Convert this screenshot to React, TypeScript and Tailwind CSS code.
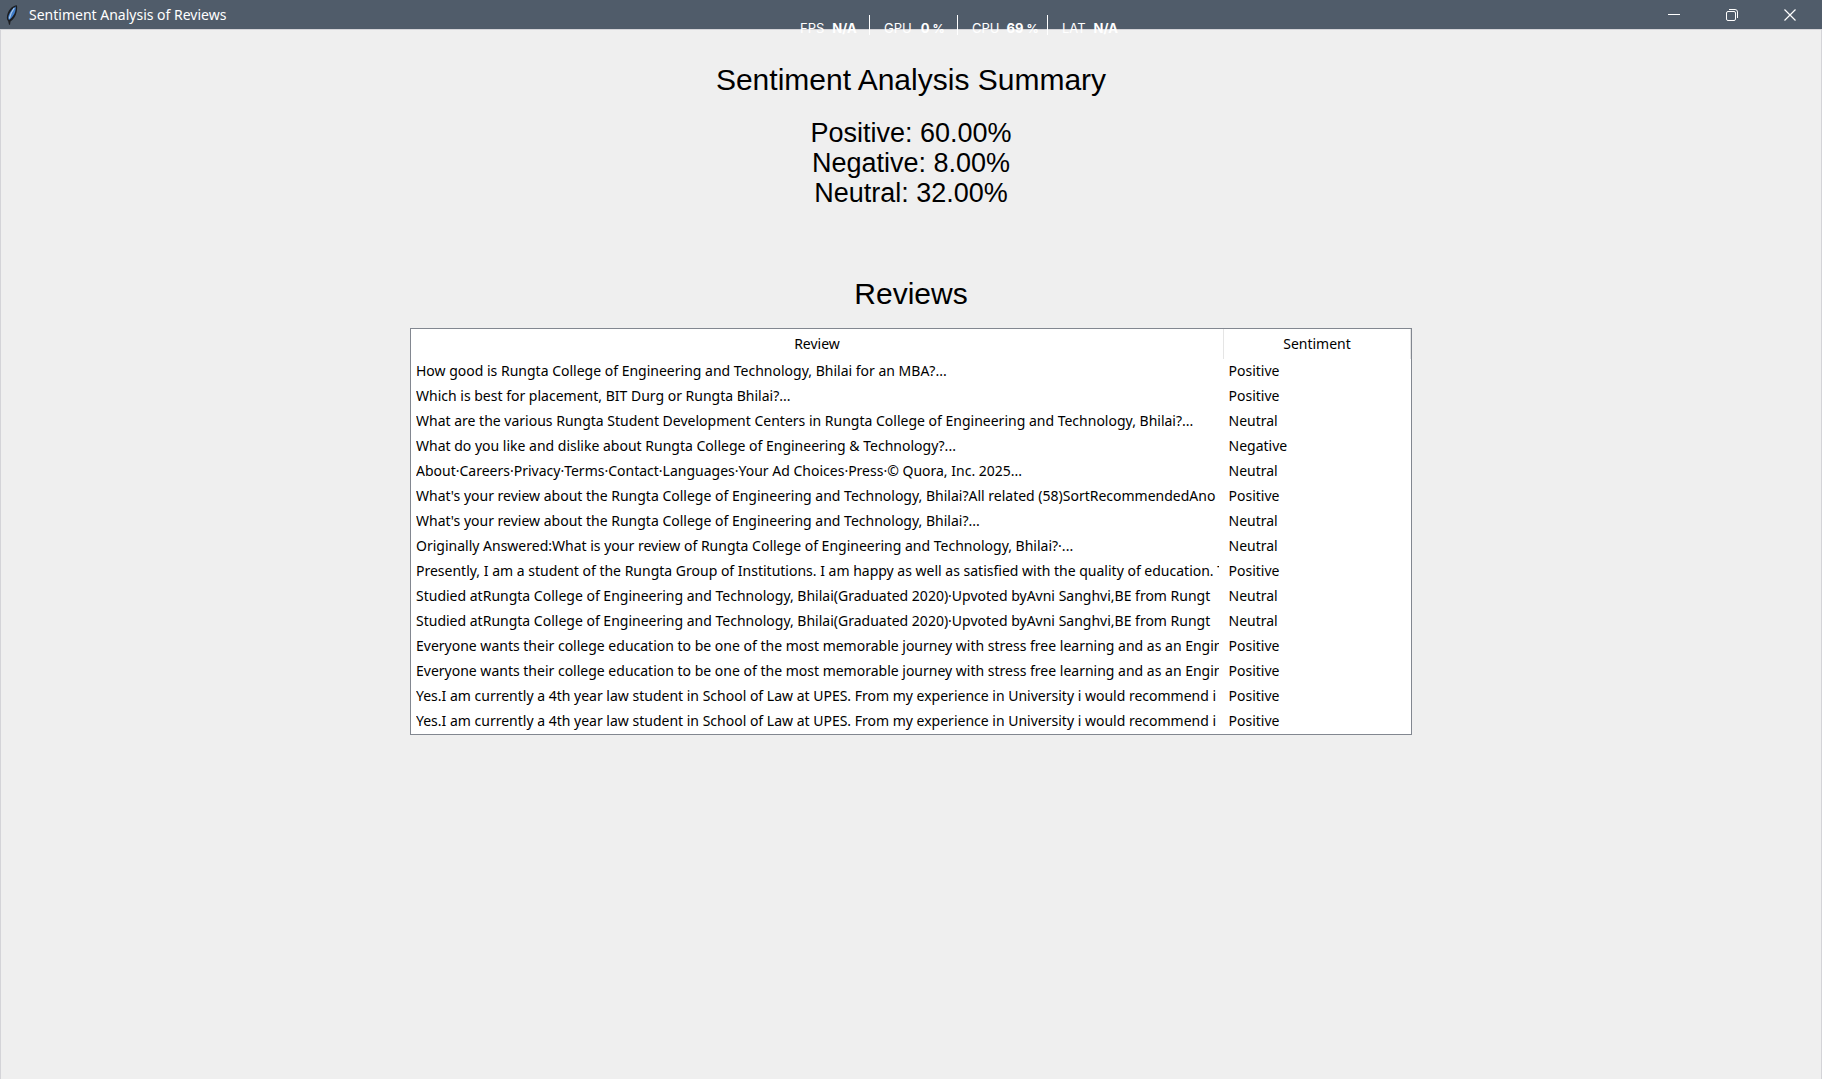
const reviews: [string, string][] = [
  ["How good is Rungta College of Engineering and Technology, Bhilai for an MBA?...", "Positive"],
  ["Which is best for placement, BIT Durg or Rungta Bhilai?...", "Positive"],
  ["What are the various Rungta Student Development Centers in Rungta College of Engineering and Technology, Bhilai?...", "Neutral"],
  ["What do you like and dislike about Rungta College of Engineering & Technology?...", "Negative"],
  ["About·Careers·Privacy·Terms·Contact·Languages·Your Ad Choices·Press·© Quora, Inc. 2025...", "Neutral"],
  ["What's your review about the Rungta College of Engineering and Technology, Bhilai?All related (58)SortRecommendedAno", "Positive"],
  ["What's your review about the Rungta College of Engineering and Technology, Bhilai?...", "Neutral"],
  ["Originally Answered:What is your review of Rungta College of Engineering and Technology, Bhilai?·...", "Neutral"],
  ["Presently, I am a student of the Rungta Group of Institutions. I am happy as well as satisfied with the quality of education. T", "Positive"],
  ["Studied atRungta College of Engineering and Technology, Bhilai(Graduated 2020)·Upvoted byAvni Sanghvi,BE from Rungt", "Neutral"],
  ["Studied atRungta College of Engineering and Technology, Bhilai(Graduated 2020)·Upvoted byAvni Sanghvi,BE from Rungt", "Neutral"],
  ["Everyone wants their college education to be one of the most memorable journey with stress free learning and as an Engin", "Positive"],
  ["Everyone wants their college education to be one of the most memorable journey with stress free learning and as an Engin", "Positive"],
  ["Yes.I am currently a 4th year law student in School of Law at UPES. From my experience in University i would recommend i", "Positive"],
  ["Yes.I am currently a 4th year law student in School of Law at UPES. From my experience in University i would recommend i", "Positive"],
];

function FeatherIcon() {
  return (
    <svg width="12" height="20" viewBox="0 0 12 20" aria-hidden="true">
      <path d="M10.800.2C7 .5 3.600 3.500 1.800 8 .500 11.500.500 14.500 2.200 16.300L3 19.800h1l.5-3.300C7.500 14.500 9.800 11 10.600 7c.6-2.600.8-5.300.2-6.800z" fill="#1b1d21" />
      <path d="M9.700 1.500C6.800 3 4.200 6.500 2.800 10c-.8 2-.7 3.800.2 5C6 13 8.500 9.500 9.300 6.300c.4-1.600.6-3.500.4-4.800z" fill="#3f7cc8" />
      <path d="M8.200 3C6 6 4.200 9.500 3.300 13.500" fill="none" stroke="#a9c8ec" strokeWidth="1.200" />
    </svg>
  );
}

function TitleBar() {
  const button = "flex h-[29px] w-[58px] items-center justify-center";
  return (
    <header className="flex h-[29px] items-center bg-[#505c6a] pl-1.5 pr-[3px] text-white">
      <FeatherIcon />
      <span className="ml-[11px] flex-1 font-['Noto_Sans',sans-serif] text-[14px]">Sentiment Analysis of Reviews</span>
      <button className={button} aria-label="Minimize">
        <svg width="12" height="12" viewBox="0 0 12 12"><path d="M0 5.500h12" stroke="#fff" /></svg>
      </button>
      <button className={button} aria-label="Restore">
        <svg width="12" height="12" viewBox="0 0 12 12" fill="none" stroke="#fff">
          <rect x=".5" y="2.500" width="9" height="9" rx="1.500" />
          <path d="M3 .5h6a2.500 2.500 0 0 1 2.500 2.500v6" />
        </svg>
      </button>
      <button className={button} aria-label="Close">
        <svg width="12" height="12" viewBox="0 0 12 12"><path d="M.5.5l11 11M11.500.5l-11 11" stroke="#fff" strokeWidth="1.200" /></svg>
      </button>
    </header>
  );
}

function PerformanceOverlay() {
  const item = "flex h-5 items-center pt-[7px]";
  return (
    <div className="pointer-events-none absolute left-[800px] top-[15px] flex font-[Inter,sans-serif] text-[13px] leading-[15px] text-white">
      <div className={`${item} w-[69px] gap-2`}><span>FPS</span><b>N/A</b></div>
      <div className={`${item} w-[88px] gap-[9px] border-l border-white pl-[14px]`}><span>GPU</span><b>0<span className="ml-[3px] text-[12px]">%</span></b></div>
      <div className={`${item} w-[90px] gap-[7px] border-l border-white pl-[14px]`}><span>CPU</span><b>69<span className="ml-[3px] text-[12px]">%</span></b></div>
      <div className={`${item} gap-2 border-l border-white pl-[14px]`}><span>LAT</span><b>N/A</b></div>
    </div>
  );
}

export default function App() {
  return (
    <div className="relative flex min-h-screen flex-col bg-[#efefef] text-black">
      <TitleBar />
      <main className="flex flex-1 flex-col items-center border-x border-t border-[#d4d4d8] font-['Liberation_Sans',Arial,sans-serif]">
        <h1 className="mt-8 text-[30px] leading-[36px]">Sentiment Analysis Summary</h1>
        <div className="mt-5 text-center text-[27px] leading-[30px]">
          <p>Positive: 60.00%</p>
          <p>Negative: 8.00%</p>
          <p>Neutral: 32.00%</p>
        </div>
        <h2 className="mt-[68px] text-[30px] leading-[36px]">Reviews</h2>
        <div className="mt-4 w-[1002px] max-w-full border border-[#828790] bg-white">
          <table className="w-full table-fixed border-collapse font-['Noto_Sans',sans-serif] text-[14px] leading-[23px]">
            <thead>
              <tr className="h-[30px]">
                <th className="border-r border-[#e5e5e5] pb-0.5 font-normal">Review</th>
                <th className="w-[187px] border-r border-[#e5e5e5] pb-0.5 font-normal">Sentiment</th>
              </tr>
            </thead>
            <tbody>
              {reviews.map(([review, sentiment], i) => (
                <tr key={i} className="h-[25px]">
                  <td className="px-[5px] pb-0.5"><div className="overflow-hidden whitespace-nowrap">{review}</div></td>
                  <td className="px-[5px] pb-0.5">{sentiment}</td>
                </tr>
              ))}
            </tbody>
          </table>
        </div>
      </main>
      <PerformanceOverlay />
    </div>
  );
}
